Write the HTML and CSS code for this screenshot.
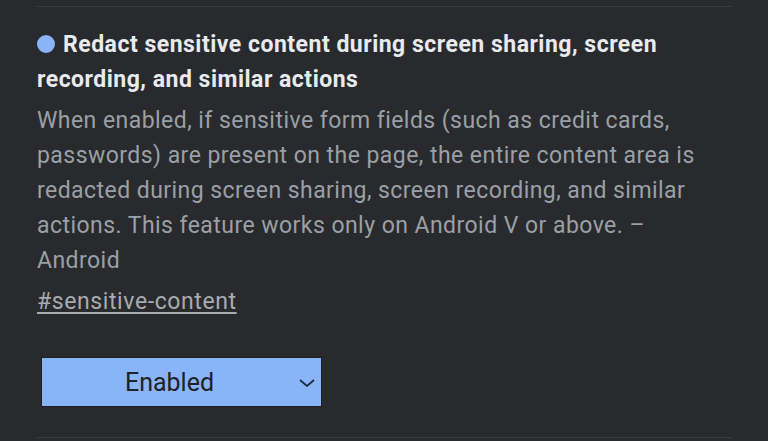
FILE: index.html
```html
<!DOCTYPE html>
<html lang="en">
<head>
<meta charset="utf-8">
<title>Flags</title>
<link rel="stylesheet" href="styles.css">
</head>
<body>
<div class="list">
  <div class="experiment">
    <h3 class="title"><span class="dot"></span>Redact sensitive content during screen sharing, screen recording, and similar actions</h3>
    <p class="desc">When enabled, if sensitive form fields (such as credit cards, passwords) are present on the page, the entire content area is redacted during screen sharing, screen recording, and similar actions. This feature works only on Android V or above. – Android</p>
    <a class="permalink" href="#sensitive-content">#sensitive-content</a>
    <div class="select">
      <span class="select-label">Enabled</span>
      <svg class="chevron" width="16" height="8" viewBox="0 0 16 8"><path d="M1 1 L8 7 L15 1" fill="none" stroke="#1f2b45" stroke-width="1.8"/></svg>
    </div>
  </div>
</div>
</body>
</html>
```

FILE: styles.css
```css
html, body {
  margin: 0;
  padding: 0;
  background: #292a2d;
}
body {
  font-family: Roboto, "Noto Sans", sans-serif;
  padding-top: 6px;
}
.list {
  margin-left: 37px;
  width: 695px;
}
.experiment {
  border-top: 1px solid #3c3d40;
  border-bottom: 1px solid #3c3d40;
  padding: 20px 15px 30px 0;
}
.title {
  margin: 0;
  font-size: 23px;
  line-height: 35px;
  font-weight: 700;
  letter-spacing: 0.5px;
  color: #e8eaed;
}
.dot {
  display: inline-block;
  width: 18px;
  height: 18px;
  border-radius: 50%;
  background: #8ab4f8;
  margin-right: 8px;
  vertical-align: -1px;
}
.desc {
  margin: 6px 0 6px;
  font-size: 23px;
  line-height: 35px;
  letter-spacing: 0.45px;
  color: #9aa0a6;
}
.permalink {
  display: inline-block;
  font-size: 23px;
  line-height: 35px;
  letter-spacing: 0.6px;
  color: #a8abb0;
  text-decoration: underline;
  text-underline-offset: 3px;
}
.select {
  margin: 38px 0 0 4px;
  width: 279px;
  height: 48px;
  background: #8ab4f8;
  border: 1px solid #1e1f22;
  display: flex;
  align-items: center;
  position: relative;
  box-sizing: content-box;
}
.select-label {
  flex: 1;
  text-align: center;
  padding-right: 24px;
  font-size: 25px;
  color: #202124;
}
.chevron {
  position: absolute;
  right: 6px;
  top: 21px;
}
```
